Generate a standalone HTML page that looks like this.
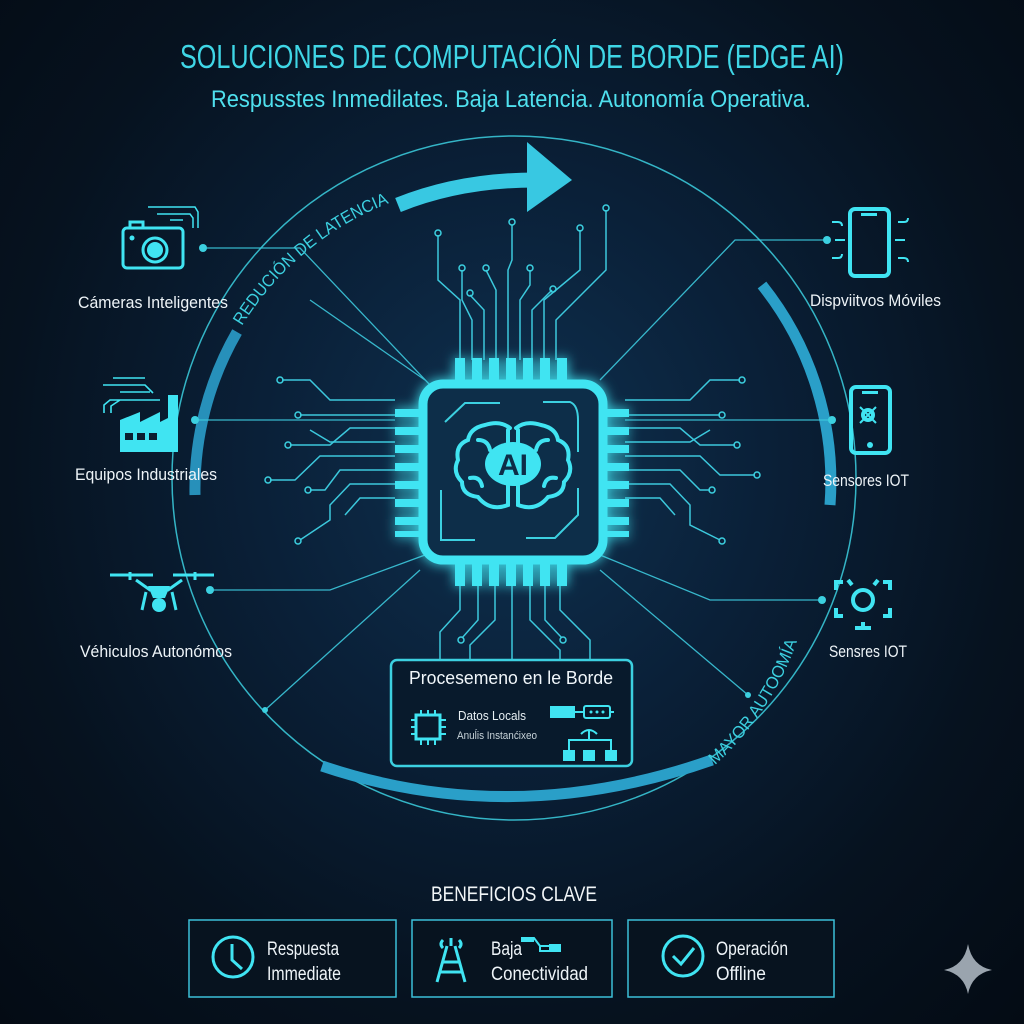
<!DOCTYPE html>
<html><head><meta charset="utf-8"><style>
html,body{margin:0;padding:0;}
body{width:1024px;height:1024px;overflow:hidden;background:radial-gradient(ellipse at 50% 45%,#0f3150 0%,#0a2038 35%,#06121f 70%,#040b14 100%);font-family:"Liberation Sans",sans-serif;}
svg{position:absolute;left:0;top:0;}
text{font-family:"Liberation Sans",sans-serif;}
</style></head><body>
<svg width="1024" height="1024" viewBox="0 0 1024 1024">
<defs>
<filter id="glow" x="-50%" y="-50%" width="200%" height="200%"><feGaussianBlur stdDeviation="6" result="b"/><feMerge><feMergeNode in="b"/><feMergeNode in="SourceGraphic"/></feMerge></filter>
<path id="arcL" d="M242 326 A300 300 0 0 1 392 202"/>
<path id="arcR" d="M715 765 A300 300 0 0 0 800 632"/>
</defs>
<text x="512" y="68" text-anchor="middle" fill="#3fd6e6" font-size="33" textLength="664" lengthAdjust="spacingAndGlyphs">SOLUCIONES DE COMPUTACIÓN DE BORDE (EDGE AI)</text>
<text x="511" y="107" text-anchor="middle" fill="#4fe0ee" font-size="24" textLength="600" lengthAdjust="spacingAndGlyphs">Respusstes Inmedilates. Baja Latencia. Autonomía Operativa.</text>

<circle cx="514" cy="478" r="342" fill="none" stroke="#3cd0e0" stroke-width="1.5" opacity="0.85"/>
<path d="M237 332 A315 315 0 0 0 195 495" fill="none" stroke="#2790ba" stroke-width="11"/>
<path d="M762 285 A315 315 0 0 1 830 505" fill="none" stroke="#2a9fc8" stroke-width="11"/>
<path d="M322 766 Q512 830 712 760" fill="none" stroke="#2a9fc8" stroke-width="11"/>
<path d="M398 205 Q460 180 535 180" fill="none" stroke="#38c8e2" stroke-width="15"/>
<polygon points="527,142 572,180 527,212" fill="#38c8e2"/>
<text fill="#3cd0e0" font-size="17"><textPath href="#arcL" textLength="195" lengthAdjust="spacingAndGlyphs">REDUCIÓN DE LATENCIA</textPath></text>
<text fill="#3cd0e0" font-size="17"><textPath href="#arcR" textLength="150" lengthAdjust="spacingAndGlyphs">MAYOR AUTOOMÍA</textPath></text>

<g stroke="#3cc8dc" stroke-width="1.3" fill="none" opacity="0.9">
<path d="M203 248 H300 L430 385"/>
<path d="M827 240 H735 L600 380"/>
<path d="M195 420 H395"/>
<path d="M832 420 H625"/>
<path d="M210 590 H330 L425 555"/>
<path d="M822 600 H710 L600 555"/>
<path d="M265 710 L420 570"/>
<path d="M748 695 L600 570"/>
<path d="M425 380 L310 300"/>
</g>
<g fill="#3cd0e0">
<circle cx="203" cy="248" r="4"/><circle cx="827" cy="240" r="4"/><circle cx="195" cy="420" r="4"/>
<circle cx="832" cy="420" r="4"/><circle cx="210" cy="590" r="4"/><circle cx="822" cy="600" r="4"/>
<circle cx="265" cy="710" r="3"/><circle cx="748" cy="695" r="3"/>
</g>

<g stroke="#3cc8dc" stroke-width="1.5" fill="none">
<path d="M460 360 V300 L438 280 V235"/>
<path d="M472 360 V320 L462 300 V270"/>
<path d="M484 360 V310 L470 295"/>
<path d="M496 360 V290 L486 270"/>
<path d="M508 360 V270 L512 260 V225"/>
<path d="M520 360 V300 L530 285 V270"/>
<path d="M532 360 V310 L552 290"/>
<path d="M544 360 V300 L580 270 V230"/>
<path d="M556 360 V320 L606 270 V210"/>
<path d="M395 400 H330 L310 380 H282"/>
<path d="M395 415 H300"/>
<path d="M395 428 H350 L330 445 H290"/>
<path d="M395 442 H330 L310 430"/>
<path d="M395 456 H320 L295 480 H270"/>
<path d="M395 470 H340 L325 490 H310"/>
<path d="M395 484 H350 L330 505 V520 L300 540"/>
<path d="M395 498 H360 L345 515"/>
<path d="M625 400 H690 L710 380 H740"/>
<path d="M625 415 H720"/>
<path d="M625 428 H680 L700 445 H735"/>
<path d="M625 442 H690 L710 430"/>
<path d="M625 456 H700 L720 475 H755"/>
<path d="M625 470 H680 L700 490 H710"/>
<path d="M625 484 H670 L690 505 V525 L720 540"/>
<path d="M625 498 H660 L675 515"/>
<path d="M460 585 V610 L440 632 V660"/>
<path d="M478 585 V620 L462 638"/>
<path d="M495 585 V620 L470 645 V660"/>
<path d="M512 585 V660"/>
<path d="M530 585 V620 L560 650 V660"/>
<path d="M545 585 V620 L562 638"/>
<path d="M560 585 V610 L590 640 V660"/>
</g>
<g fill="none" stroke="#3cd0e0" stroke-width="1.5">
<circle cx="438" cy="233" r="3"/><circle cx="462" cy="268" r="3"/><circle cx="470" cy="293" r="3"/><circle cx="486" cy="268" r="3"/>
<circle cx="512" cy="222" r="3"/><circle cx="530" cy="268" r="3"/><circle cx="553" cy="289" r="3"/><circle cx="580" cy="228" r="3"/><circle cx="606" cy="208" r="3"/>
<circle cx="280" cy="380" r="3"/><circle cx="298" cy="415" r="3"/><circle cx="288" cy="445" r="3"/><circle cx="268" cy="480" r="3"/><circle cx="308" cy="490" r="3"/><circle cx="298" cy="541" r="3"/>
<circle cx="742" cy="380" r="3"/><circle cx="722" cy="415" r="3"/><circle cx="737" cy="445" r="3"/><circle cx="757" cy="475" r="3"/><circle cx="712" cy="490" r="3"/><circle cx="722" cy="541" r="3"/>
<circle cx="461" cy="640" r="3"/><circle cx="563" cy="640" r="3"/>
</g>

<g filter="url(#glow)">
<g fill="#40e4f2">
<rect x="455" y="358" width="10" height="26"/><rect x="472" y="358" width="10" height="26"/><rect x="489" y="358" width="10" height="26"/><rect x="506" y="358" width="10" height="26"/><rect x="523" y="358" width="10" height="26"/><rect x="540" y="358" width="10" height="26"/><rect x="557" y="358" width="10" height="26"/>
<rect x="455" y="560" width="10" height="26"/><rect x="472" y="560" width="10" height="26"/><rect x="489" y="560" width="10" height="26"/><rect x="506" y="560" width="10" height="26"/><rect x="523" y="560" width="10" height="26"/><rect x="540" y="560" width="10" height="26"/><rect x="557" y="560" width="10" height="26"/>
<rect x="395" y="409" width="26" height="8"/><rect x="395" y="427" width="26" height="8"/><rect x="395" y="445" width="26" height="8"/><rect x="395" y="463" width="26" height="8"/><rect x="395" y="481" width="26" height="8"/><rect x="395" y="499" width="26" height="8"/><rect x="395" y="517" width="26" height="8"/><rect x="395" y="531" width="26" height="6"/>
<rect x="603" y="409" width="26" height="8"/><rect x="603" y="427" width="26" height="8"/><rect x="603" y="445" width="26" height="8"/><rect x="603" y="463" width="26" height="8"/><rect x="603" y="481" width="26" height="8"/><rect x="603" y="499" width="26" height="8"/><rect x="603" y="517" width="26" height="8"/><rect x="603" y="531" width="26" height="6"/>
</g>
<rect x="423" y="384" width="180" height="176" rx="20" fill="#0d2d48" stroke="#40e4f2" stroke-width="9"/>
</g>
<g stroke="#3cd0e0" stroke-width="2" fill="none">
<path d="M445 422 L465 403 H500"/><path d="M543 402 H570 Q578 405 578 420 V452"/>
<path d="M441 490 V540 H475"/><path d="M526 538 H555 L578 515 V488"/>
</g>
<g stroke="#40e4f2" stroke-width="4" fill="none" stroke-linecap="round">
<path d="M510 428 Q500 420 485 425 Q470 428 468 440 Q455 445 458 460 Q452 472 462 482 Q462 495 478 497 Q490 512 508 505 V430"/>
<path d="M516 428 Q526 420 541 425 Q556 428 558 440 Q571 445 568 460 Q574 472 564 482 Q564 495 548 497 Q536 512 518 505 V430"/>
<path d="M478 440 Q488 440 490 450"/><path d="M548 440 Q538 440 536 450"/>
<path d="M470 478 Q480 476 482 486"/><path d="M556 478 Q546 476 544 486"/>
</g>
<ellipse cx="513" cy="464" rx="28" ry="22" fill="#40e4f2"/>
<text x="513" y="475" text-anchor="middle" font-size="30" font-weight="bold" fill="#0d2d48">AI</text>

<rect x="391" y="660" width="241" height="106" rx="6" fill="#081a2c" stroke="#3cd0e0" stroke-width="2.5"/>
<text x="511" y="684" text-anchor="middle" font-size="18" fill="#f0f6fa" textLength="204" lengthAdjust="spacingAndGlyphs">Procesemeno en le Borde</text>
<text x="458" y="720" font-size="13" fill="#e8f0f4" textLength="68" lengthAdjust="spacingAndGlyphs">Datos Locals</text>
<text x="457" y="739" font-size="11" fill="#c8d4da" textLength="80" lengthAdjust="spacingAndGlyphs">Anuĺis Instanćixeo</text>
<g fill="#40e4f2">
<rect x="416" y="715" width="24" height="24" fill="none" stroke="#40e4f2" stroke-width="3"/>
<rect x="550" y="706" width="25" height="12"/>
<rect x="563" y="750" width="12" height="11"/><rect x="583" y="750" width="12" height="11"/><rect x="605" y="750" width="12" height="11"/>
</g>
<g stroke="#40e4f2" stroke-width="2" fill="none">
<path d="M411 720 H416 M411 727 H416 M411 734 H416 M440 720 H446 M440 727 H446 M440 734 H446 M421 710 V715 M428 710 V715 M435 710 V715 M421 739 V745 M428 739 V745 M435 739 V745"/>
<rect x="584" y="706" width="26" height="12" rx="2"/><path d="M575 712 H584 M610 712 H614"/>
<path d="M569 750 V740 H611 V750 M589 740 V730 M581 734 Q589 726 597 734"/>
</g>
<g fill="#40e4f2"><circle cx="591" cy="712" r="1.5"/><circle cx="597" cy="712" r="1.5"/><circle cx="603" cy="712" r="1.5"/></g>

<!-- camera -->
<g stroke="#40e4f2" stroke-width="3" fill="none">
<rect x="123" y="228" width="60" height="40" rx="4"/><circle cx="155" cy="250" r="12"/>
<path d="M130 228 V222 H143 V228"/>
</g>
<g stroke="#40e4f2" stroke-width="1.5" fill="none"><path d="M148 207 H195 L198 212 V228 M157 214 H190 L193 218 V228 M170 220 H183"/></g>
<circle cx="155" cy="250" r="8" fill="#40e4f2"/><circle cx="132" cy="238" r="2.5" fill="#40e4f2"/>
<!-- factory -->
<g fill="#40e4f2">
<path d="M120 452 V420 L140 412 V422 L160 412 V422 L168 418 V395 H178 V452 Z"/>
</g>
<g fill="#0a1e30"><rect x="125" y="433" width="8" height="7"/><rect x="137" y="433" width="8" height="7"/><rect x="149" y="433" width="8" height="7"/></g>
<g stroke="#40e4f2" stroke-width="1.6" fill="none"><path d="M103 385 H145 L153 393 M113 378 H145 M120 392 H150 M104 413 V405 L110 400 H160 M111 413 V406 L120 400"/></g>
<!-- drone -->
<g stroke="#40e4f2" stroke-width="3" fill="none">
<path d="M110 575 H153 M173 575 H214 M130 572 V580 M195 572 V580"/>
<path d="M136 580 L150 590 H168 L182 580"/>
<path d="M146 592 L142 610 M172 592 L176 610"/>
</g>
<path d="M148 586 H170 L165 598 H153 Z" fill="#40e4f2"/>
<circle cx="159" cy="605" r="7" fill="#40e4f2"/>
<text x="78" y="308" font-size="17" fill="#eef4f8" textLength="150" lengthAdjust="spacingAndGlyphs">Cámeras Inteligentes</text>
<text x="75" y="480" font-size="17" fill="#eef4f8" textLength="142" lengthAdjust="spacingAndGlyphs">Equipos Industriales</text>
<text x="80" y="657" font-size="17" fill="#eef4f8" textLength="152" lengthAdjust="spacingAndGlyphs">Véhiculos Autonómos</text>

<!-- right icons -->
<g stroke="#40e4f2" stroke-width="4" fill="none">
<rect x="850" y="209" width="39" height="67" rx="5"/>
<rect x="851" y="387" width="39" height="66" rx="5"/>
<circle cx="868" cy="415" r="5"/>
<circle cx="863" cy="600" r="10"/>
</g>
<rect x="861" y="213" width="16" height="3" fill="#40e4f2"/><rect x="862" y="391" width="16" height="3" fill="#40e4f2"/>
<g stroke="#40e4f2" stroke-width="2" fill="none">
<path d="M832 222 H838 Q842 222 842 226 M835 240 H845 M832 258 H838 Q842 258 842 254 M898 222 H904 Q908 222 908 218 M895 240 H905 M898 258 H904 Q908 258 908 262"/>
<path d="M860 407 L876 423 M876 407 L860 423"/>
</g>
<g stroke="#40e4f2" stroke-width="4" fill="none">
<path d="M836 590 V582 H843 M883 582 H890 V590 M836 608 V616 H843 M883 616 H890 V608 M848 580 L852 585 M878 580 L874 585"/>
<path d="M855 628 H871 M863 622 V628"/>
</g>
<circle cx="870" cy="445" r="3" fill="#40e4f2"/>
<text x="810" y="306" font-size="17" fill="#eef4f8" textLength="131" lengthAdjust="spacingAndGlyphs">Dispviitvos Móviles</text>
<text x="823" y="486" font-size="17" fill="#eef4f8" textLength="86" lengthAdjust="spacingAndGlyphs">Sensores IOT</text>
<text x="829" y="657" font-size="17" fill="#eef4f8" textLength="78" lengthAdjust="spacingAndGlyphs">Sensres IOT</text>

<!-- benefits -->
<text x="514" y="901" text-anchor="middle" font-size="21" fill="#f2f6f8" textLength="166" lengthAdjust="spacingAndGlyphs">BENEFICIOS CLAVE</text>
<g fill="#07131f" stroke="#3cc0d8" stroke-width="1.5">
<rect x="189" y="920" width="207" height="77"/>
<rect x="412" y="920" width="200" height="77"/>
<rect x="628" y="920" width="206" height="77"/>
</g>
<g stroke="#40e4f2" stroke-width="3" fill="none">
<circle cx="233" cy="957" r="20"/><path d="M232 944 V960 L242 969"/>
<circle cx="683" cy="956" r="20"/><path d="M673 956 L681 964 L694 948"/>
<path d="M447 946 L437 982 M455 946 L465 982 M443 962 H459 M440 972 H462 M451 938 V946"/>
<path d="M443 940 Q439 944 443 948 M459 940 Q463 944 459 948"/>
</g>
<path d="M521 938 H534 L540 946 H549 M540 946 V951 H560 V946" stroke="#40e4f2" stroke-width="2" fill="none"/>
<polygon points="521,937 534,937 534,942 521,942" fill="#40e4f2"/>
<polygon points="549,944 561,944 561,951 549,951" fill="#40e4f2"/>
<text x="267" y="955" font-size="19" fill="#eef4f8" textLength="72" lengthAdjust="spacingAndGlyphs">Respuesta</text>
<text x="267" y="980" font-size="19" fill="#eef4f8" textLength="74" lengthAdjust="spacingAndGlyphs">Immediate</text>
<text x="491" y="955" font-size="19" fill="#eef4f8" textLength="31" lengthAdjust="spacingAndGlyphs">Baja</text>
<text x="491" y="980" font-size="19" fill="#eef4f8" textLength="97" lengthAdjust="spacingAndGlyphs">Conectividad</text>
<text x="716" y="955" font-size="19" fill="#eef4f8" textLength="72" lengthAdjust="spacingAndGlyphs">Operación</text>
<text x="716" y="980" font-size="19" fill="#eef4f8" textLength="50" lengthAdjust="spacingAndGlyphs">Offline</text>

<path d="M968 944 Q972 966 992 970 Q972 974 968 994 Q964 974 944 970 Q964 966 968 944 Z" fill="#9aa4ae"/>
</svg>
</body></html>
